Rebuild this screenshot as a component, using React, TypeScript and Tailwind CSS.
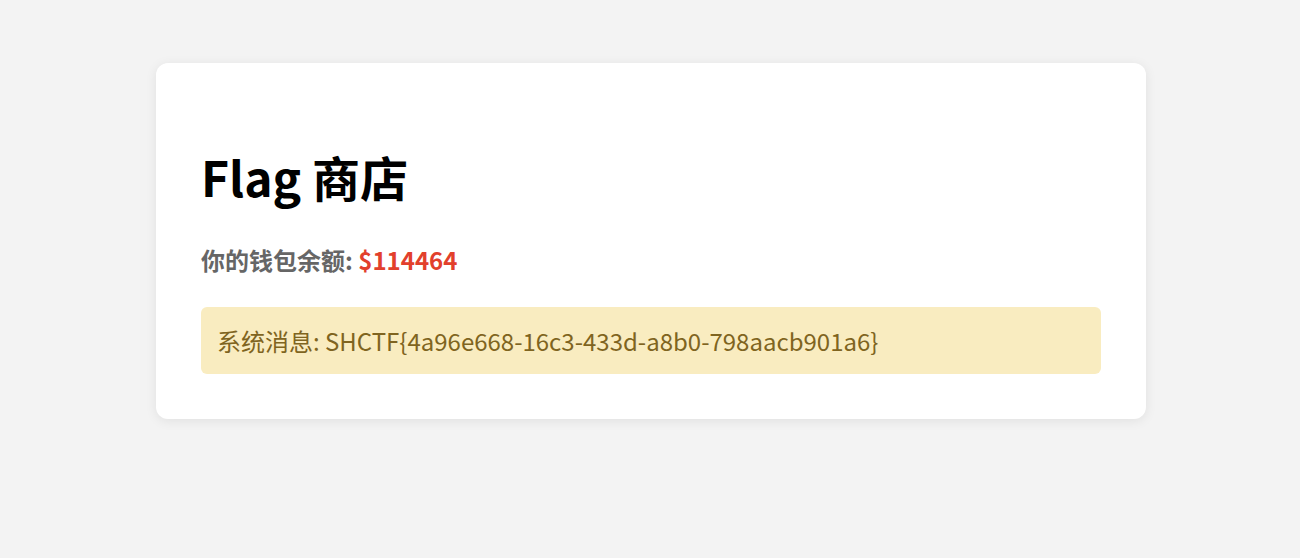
export default function App() {
  return (
    <div
      className="min-h-[558px] w-full bg-[#f3f3f3] pt-[63px]"
      style={{ fontFamily: '"Noto Sans CJK SC", "Noto Sans", sans-serif' }}
    >
      <div className="ml-[156px] w-[990px] rounded-[12px] bg-white px-[45px] pt-[84px] pb-[45px] shadow-[0_2px_12px_rgba(0,0,0,0.08)]">
        <h1 className="text-[48px] font-bold leading-[58px] text-black">Flag 商店</h1>
        <p className="mt-[39px] text-[24px] font-bold leading-[32px] text-[#666666]">
          你的钱包余额: <span className="text-[#e2402c]">$114464</span>
        </p>
        <div className="mt-[31px] rounded-[6px] bg-[#f9ecc0] px-[16px] py-[17px] text-[24px] leading-[33px] text-[#7f6420]">
          系统消息: SHCTF{"{"}4a96e668-16c3-433d-a8b0-798aacb901a6{"}"}
        </div>
      </div>
    </div>
  );
}
